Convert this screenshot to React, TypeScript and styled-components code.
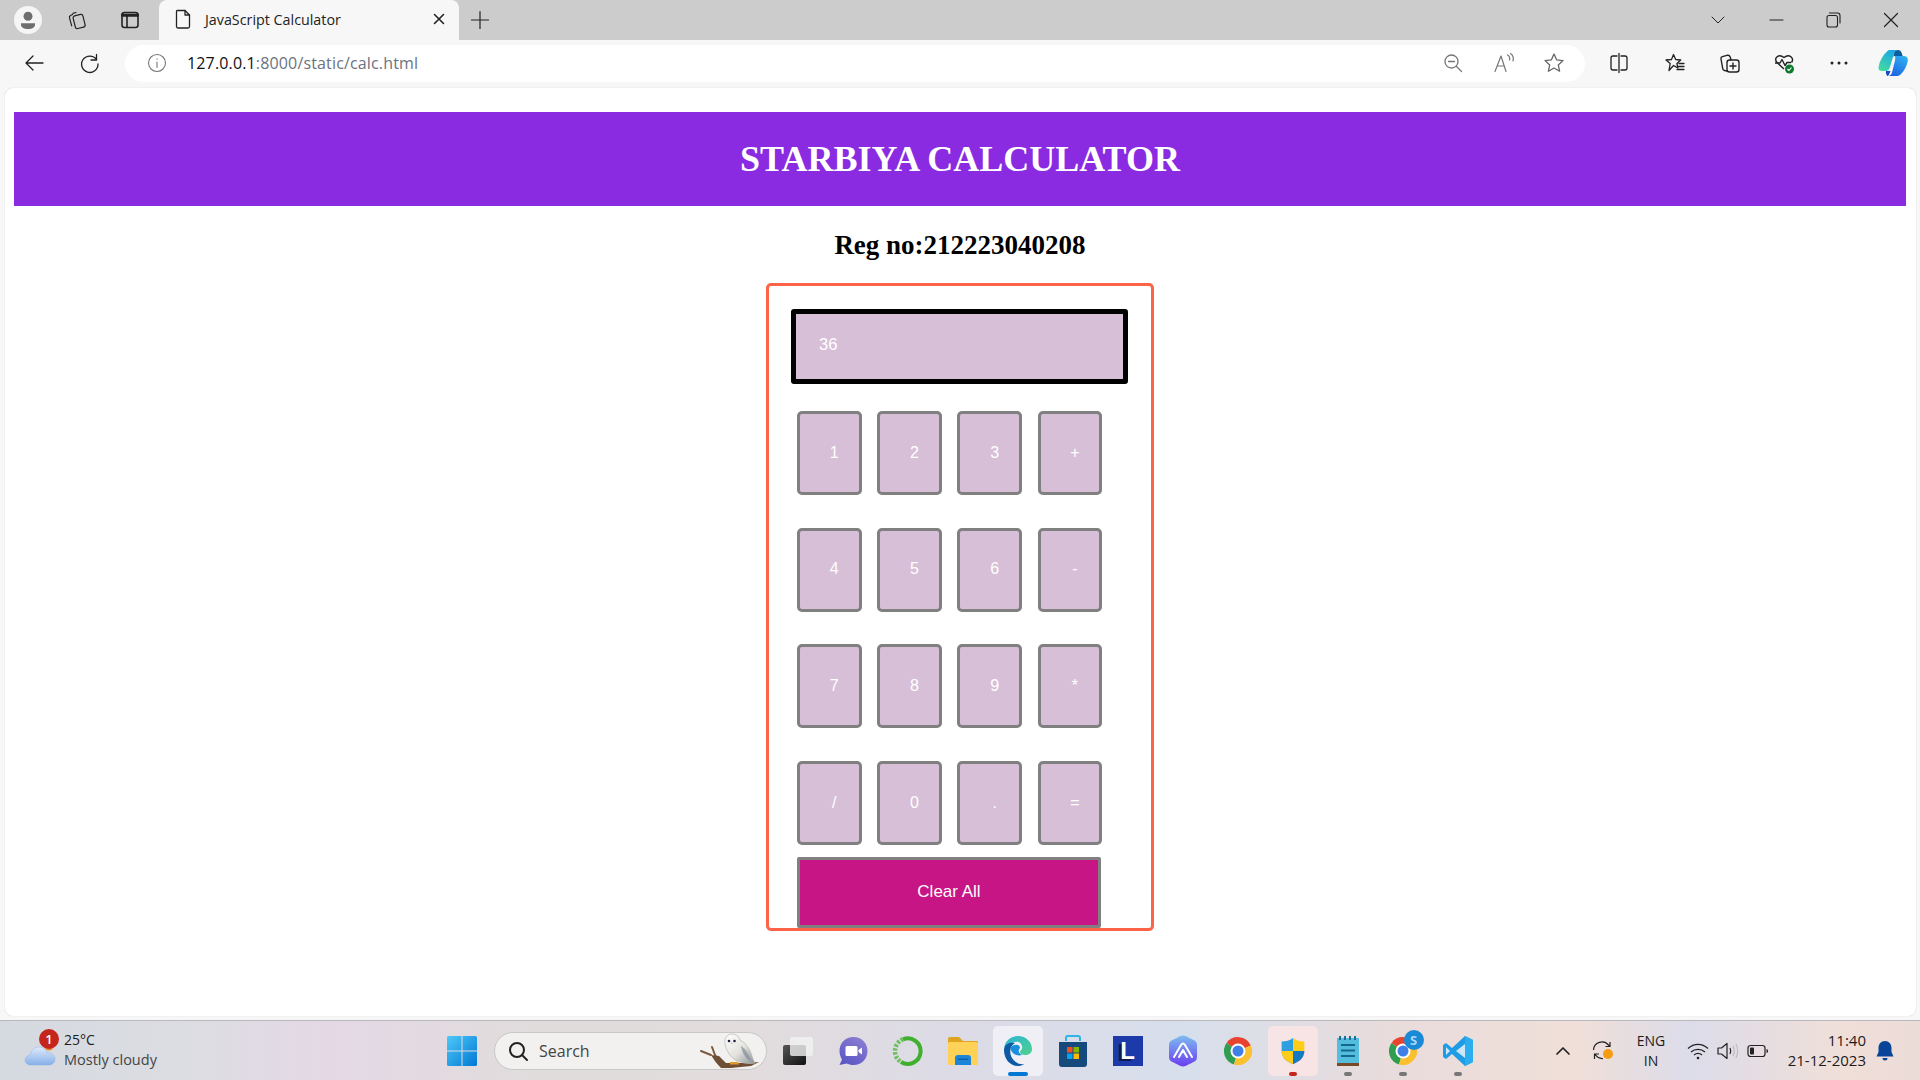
import React from "react";
import styled, { createGlobalStyle } from "styled-components";

const GlobalStyle = createGlobalStyle`
  html, body { margin: 0; padding: 0; height: 100%; overflow: hidden; }
  body { font-family: "Open Sans", "Noto Sans", sans-serif; background: #f7f7f7; }
  #root { height: 100%; }
`;

const KEYS = ["1", "2", "3", "+", "4", "5", "6", "-", "7", "8", "9", "*", "/", "0", ".", "="];

const Line = ({ color = "#222", w = 1.4, children }: { color?: string; w?: number; children: React.ReactNode }) => (
  <svg width="24" height="24" viewBox="0 0 24 24" fill="none" stroke={color} strokeWidth={w} strokeLinecap="round" strokeLinejoin="round">
    {children}
  </svg>
);

const Profile = () => (
  <svg width="30" height="30" viewBox="0 0 30 30">
    <circle cx="15" cy="15" r="15" fill="#f5f5f5" />
    <circle cx="15" cy="11" r="4.8" fill="#6e6e6e" />
    <path d="M7.5 18.5h15v1.5c0 3-3.4 4.6-7.5 4.6S7.5 23 7.5 20z" fill="#6e6e6e" />
  </svg>
);

const Chevron = () => <Line w={1}><path d="M6 9l6 6 6-6" /></Line>;

export default function App() {
  return (
    <Screen>
      <GlobalStyle />
      <TabStrip>
        <Slot $w={14} />
        <Slot $w={28}><Profile /></Slot>
        <Slot $w={23} />
        <Slot $w={24}>
          <Line w={1.2}>
            <rect x="9" y="7" width="10" height="13" rx="2" transform="rotate(-14 14 13)" />
            <path d="M7.5 6.5l-2 1c-1 .6-1.300 1.400-1 2.400l2.200 8M11 4.500l-3 .8" />
          </Line>
        </Slot>
        <Slot $w={29} />
        <Slot $w={24}>
          <Line w={1.6}>
            <rect x="4" y="4.500" width="16" height="15" rx="2.500" />
            <path d="M4 6.500h16V8H4z" fill="#222" />
            <path d="M9 8v11" />
          </Line>
        </Slot>
        <Slot $w={17} />
        <Tab>
          <Slot $w={24}>
            <Line w={1.3}>
              <path d="M6 3.500h8l4.500 4.500v11.500a1.500 1.500 0 0 1-1.500 1.500H7a1.500 1.500 0 0 1-1.500-1.500V5A1.500 1.500 0 0 1 6 3.500z" />
              <path d="M14 3.500V8h4.500" />
            </Line>
          </Slot>
          <TabTitle>JavaScript Calculator</TabTitle>
          <Slot $w={24}><Line w={1.6}><path d="M7.500 7.500l9 9M16.500 7.500l-9 9" /></Line></Slot>
        </Tab>
        <Slot $w={9} />
        <Slot $w={24}><Line w={1.2}><path d="M12 3.500v17M3.500 12h17" /></Line></Slot>
        <Spacer />
        <Slot $w={24}><Chevron /></Slot>
        <Slot $w={34} />
        <Slot $w={24}><Line w={1.2}><path d="M6 12h13" /></Line></Slot>
        <Slot $w={33} />
        <Slot $w={24}>
          <Line w={1.1}>
            <rect x="6" y="7.500" width="10.500" height="11.500" rx="2" />
            <path d="M8.500 5h8a2.500 2.500 0 0 1 2.500 2.500V15" />
          </Line>
        </Slot>
        <Slot $w={34} />
        <Slot $w={24}><Line w={1.2}><path d="M5.500 5.500l13 13M18.500 5.500l-13 13" /></Line></Slot>
        <Slot $w={17} />
      </TabStrip>

      <Toolbar>
        <Slot $w={22} />
        <Slot $w={24}><Line w={1.3}><path d="M21 12H4M11 5l-7 7 7 7" /></Line></Slot>
        <Slot $w={32} />
        <Slot $w={24}>
          <Line w={1.3}>
            <path d="M18.500 3.500V9H13" />
            <path d="M18.500 8.500A8.200 8.200 0 1 0 20 13" />
          </Line>
        </Slot>
        <Slot $w={23} />
        <AddressBar>
          <Slot $w={20} />
          <Slot $w={24}>
            <Line color="#777" w={1.1}>
              <circle cx="12" cy="12" r="8.500" />
              <path d="M12 11v5.500M12 7.800v.4" />
            </Line>
          </Slot>
          <Slot $w={18} />
          <Url>
            <b>127.0.0.1</b>:8000/static/calc.html
          </Url>
          <Spacer />
          <Slot $w={24}>
            <Line color="#777" w={1.3}>
              <circle cx="10.500" cy="10.500" r="6.500" />
              <path d="M7.500 10.500h6M15.500 15.500l5 5" />
            </Line>
          </Slot>
          <Slot $w={27} />
          <Slot $w={24}>
            <Line color="#777" w={1.2}>
              <path d="M3 20.500L9 5l5 15.500M5 15h7.500" />
              <path d="M15.500 4c1.800 1 2.600 3 2 5M18.500 2.500c2.500 1.800 3.300 4.500 2.500 7.500" />
            </Line>
          </Slot>
          <Slot $w={26} />
          <Slot $w={24}>
            <Line color="#666" w={1.3}>
              <path d="M12 3l2.700 5.900 6.300.7-4.700 4.300 1.300 6.300-5.600-3.200-5.600 3.200 1.300-6.300L3 9.600l6.300-.7z" />
            </Line>
          </Slot>
          <Slot $w={19} />
        </AddressBar>
        <Slot $w={22} />
        <Slot $w={24}>
          <Line w={1.3}>
            <path d="M10 5H6a2 2 0 0 0-2 2v10a2 2 0 0 0 2 2h4M14 5h4a2 2 0 0 1 2 2v10a2 2 0 0 1-2 2h-4M12 2.500v19" />
          </Line>
        </Slot>
        <Slot $w={32} />
        <Slot $w={24}>
          <Line w={1.3}>
            <path d="M10.500 3.500l2.200 5 5 .5-3.800 3.500 1 4.500-4.400-2.500L6 19.500 7.200 12.500 3 9l5.500-.5z" />
            <path d="M16 12.500h5M15.500 15.500H21M14 18.500h7" />
          </Line>
        </Slot>
        <Slot $w={31} />
        <Slot $w={24}>
          <Line w={1.4}>
            <rect x="9" y="9" width="12" height="12" rx="2.500" />
            <path d="M15 12v6M12 15h6" />
            <path d="M9 20l-2.500-.5c-1-.3-1.600-1-1.800-2L3 8c-.2-1 .3-2 1.300-2.300L9 4.300c1.500-.4 2.600 0 3.200 1.700l.8 3" />
          </Line>
        </Slot>
        <Slot $w={30} />
        <Slot $w={24}>
          <svg width="24" height="24" viewBox="0 0 24 24" fill="none" stroke="#222" strokeWidth="1.400" strokeLinejoin="round">
            <path d="M12 18l-7-6.500C1.500 7.500 6.500 2 12 6.500 17.500 2 22.500 7.500 19.500 11.500" />
            <path d="M3 12h5l2-3.500 3 6 2-3h4" />
            <circle cx="17.500" cy="18" r="4.500" fill="#0e7a2f" stroke="none" />
            <path d="M15.500 18l1.500 1.500 2.500-3" stroke="#fff" strokeWidth="1.100" />
          </svg>
        </Slot>
        <Slot $w={31} />
        <Slot $w={24}>
          <svg width="24" height="24" viewBox="0 0 24 24" fill="#222">
            <circle cx="5" cy="12" r="1.500" />
            <circle cx="12" cy="12" r="1.500" />
            <circle cx="19" cy="12" r="1.500" />
          </svg>
        </Slot>
        <Slot $w={27} />
        <Slot $w={30}>
          <svg width="30" height="28" viewBox="0 0 30 28">
            <defs>
              <linearGradient id="cpA" x1="0.7" y1="0" x2="0.2" y2="1">
                <stop offset="0" stopColor="#1ba6e6" />
                <stop offset="1" stopColor="#45dba0" />
              </linearGradient>
              <linearGradient id="cpB" x1="0.8" y1="0" x2="0.2" y2="1">
                <stop offset="0" stopColor="#2fb0f2" />
                <stop offset="1" stopColor="#1c62e0" />
              </linearGradient>
            </defs>
            <path d="M9 2.500C10 1.300 11 1 12.500 1H20c-2 0-3.500 1.500-4 3.500L12 18c-.7 2.500-2 4-4.500 4H4C1.500 22 0 20.500.5 18 1.500 12.500 4.500 6.500 9 2.500z" fill="url(#cpA)" />
            <path d="M17 7h8.500c3 0 4.800 2 4.300 5-1 5-3.500 10-7 13.200-1 1-2.500 1.800-4 1.800H10c2 0 3.500-1.500 4-3.500l3-12c.4-1.600.2-3.500 0-4.500z" fill="url(#cpB)" />
            <path d="M20 1c1.700 0 3 1 3.500 2.500L24.700 7H17c-.8 0-1.500.4-1.800 1l.8-3.500C16.500 2.500 18 1 20 1z" fill="#0b5f9e" />
            <path d="M8 22h4.500l-1 2.500c-.4 1-.8 1.800-1.500 2.500H9.500c-1.300-1-1.800-3-1.500-5z" fill="#1a46c8" />
          </svg>
        </Slot>
        <Spacer />
      </Toolbar>

      <PageFrame>
        <Banner>STARBIYA CALCULATOR</Banner>
        <RegNo>Reg no:212223040208</RegNo>
        <Calculator>
          <Display readOnly value="36" />
          <Keys>
            {KEYS.map((k) => (
              <Key key={k}>{k}</Key>
            ))}
          </Keys>
          <ClearAll>Clear All</ClearAll>
        </Calculator>
      </PageFrame>

      <Taskbar>
        <Weather>
          <WeatherIcon>
            <svg width="36" height="38" viewBox="0 0 36 38">
              <defs>
                <linearGradient id="cloud" x1="0" y1="0" x2="0" y2="1">
                  <stop offset="0" stopColor="#dfeafa" />
                  <stop offset="1" stopColor="#86b0ea" />
                </linearGradient>
              </defs>
              <circle cx="25" cy="13" r="4.500" fill="#f08a24" />
              <path d="M7 32c-3.500 0-6-2-6-5 0-2.500 2-4.500 4.800-4.800C7 17.500 10.500 14 15 14c4 0 7 2.300 8 5.600 4 0 8 2.400 8 6.400s-3 6-6.500 6z" fill="url(#cloud)" stroke="#8fb3e4" strokeWidth=".5" />
            </svg>
            <Badge>1</Badge>
          </WeatherIcon>
          <WeatherText>
            <Temp>25°C</Temp>
            <Sky>Mostly cloudy</Sky>
          </WeatherText>
        </Weather>

        <Slot $w={42}>
          <svg width="30" height="30" viewBox="0 0 30 30">
            <defs>
              <linearGradient id="win" x1="0" y1="0" x2="1" y2="1">
                <stop offset="0" stopColor="#4fc8f8" />
                <stop offset="1" stopColor="#0078d4" />
              </linearGradient>
            </defs>
            <path d="M0 1.500A1.500 1.500 0 0 1 1.500 0h13v14.500H0zM15.500 0h13A1.500 1.500 0 0 1 30 1.500v13H15.500zM0 15.500h14.500V30h-13A1.500 1.500 0 0 1 0 28.500zM15.500 15.500H30v13a1.500 1.500 0 0 1-1.500 1.500h-13z" fill="url(#win)" />
          </svg>
        </Slot>
        <Slot $w={11} />
        <SearchBox>
          <Slot $w={24}>
            <Line w={2}>
              <circle cx="11" cy="11" r="7" />
              <path d="M16 16l5 5" />
            </Line>
          </Slot>
          <SearchLabel>Search</SearchLabel>
          <Spacer />
          <svg width="66" height="36" viewBox="0 0 66 36">
            <defs>
              <linearGradient id="owl" x1="0" y1="0" x2="1" y2="1">
                <stop offset="0" stopColor="#ffffff" />
                <stop offset="0.55" stopColor="#e2e2dc" />
                <stop offset="1" stopColor="#8b9097" />
              </linearGradient>
            </defs>
            <path d="M3 18l10 4M14 14l3 8 4 7" fill="none" stroke="#7d5a40" strokeWidth="2" strokeLinecap="round" />
            <path d="M13 22l8 1 7 7 18 0 15-1-8 4-20 2-10 0c-4-4-7-8-10-13z" fill="#6f4e36" />
            <path d="M27 10c-1-4 2-9 7-9s7 3 8 6c6 3 10 9 12 16 .8 3 2 5 3 7-6 1-13 0-18-2-6-3-11-10-12-18z" fill="url(#owl)" stroke="#bdbdb6" strokeWidth=".8" />
            <path d="M43 13c5 3 8 9 10 15-5-2-9-8-10-15z" fill="#7d8796" fillOpacity=".65" />
            <circle cx="31" cy="8" r="1.300" fill="#1f1f44" />
            <circle cx="36.500" cy="8" r="1.300" fill="#1f1f44" />
            <path d="M33.800 9l-.7 1.800h1.400z" fill="#c49b6a" />
            <path d="M32 29h8l1 2.500h-9z" fill="#e09a30" />
          </svg>
        </SearchBox>
        <Slot $w={3} />

        <TaskIcon>
          <svg width="30" height="28" viewBox="0 0 30 28">
            <defs>
              <linearGradient id="dk" x1="0" y1="0" x2="1" y2="1">
                <stop offset="0" stopColor="#555" />
                <stop offset="1" stopColor="#111" />
              </linearGradient>
            </defs>
            <rect x="0" y="8" width="23" height="20" rx="2" fill="url(#dk)" />
            <rect x="7" y="0" width="23" height="19" rx="2" fill="#f2f2f2" fillOpacity=".8" />
          </svg>
        </TaskIcon>
        <TaskIcon>
          <svg width="30" height="30" viewBox="0 0 30 30">
            <defs>
              <linearGradient id="meet" x1="0.8" y1="0" x2="0.2" y2="1">
                <stop offset="0" stopColor="#8c7fd2" />
                <stop offset="1" stopColor="#5a55c4" />
              </linearGradient>
            </defs>
            <path d="M15.500 1C7.500 1 1.500 7 1.500 15c0 3 1 6 2.500 8.500L1.500 29l7-1.500c2 .9 4.500 1.500 7 1.500 8 0 14-6 14-14S23.500 1 15.500 1z" fill="url(#meet)" />
            <rect x="7.500" y="10" width="12" height="10" rx="1.500" fill="#fff" />
            <path d="M20.500 14l3.500-2.500v7L20.500 16z" fill="#fff" />
          </svg>
        </TaskIcon>
        <TaskIcon>
          <svg width="32" height="32" viewBox="0 0 32 32" fill="none">
            <path d="M11 4.300A12.800 12.800 0 1 1 9 27" stroke="#3fb02e" strokeWidth="4" />
            <path d="M11 4.300A12.800 12.800 0 0 0 9 27" stroke="#6cc05c" strokeWidth="4.500" strokeDasharray="2.500 1.500" />
          </svg>
        </TaskIcon>
        <TaskIcon>
          <svg width="32" height="30" viewBox="0 0 32 30">
            <path d="M1 3a2 2 0 0 1 2-2h9l4 4h14a1 1 0 0 1 1 1v4H1z" fill="#e0a520" />
            <rect x="1" y="6" width="30" height="23" rx="1.500" fill="#fdd257" />
            <path d="M8 29v-7a3 3 0 0 1 3-3h10a3 3 0 0 1 3 3v7z" fill="#1b86d8" />
            <rect x="11" y="22.500" width="10" height="1.500" fill="#0f5fa8" />
          </svg>
        </TaskIcon>
        <TaskIcon $bg="rgba(245,245,250,.75)">
          <svg width="30" height="32" viewBox="0 0 30 32">
            <defs>
              <linearGradient id="edgeA" x1="0" y1="0" x2="1" y2="1">
                <stop offset="0" stopColor="#2bb5d8" />
                <stop offset="1" stopColor="#4fd18a" />
              </linearGradient>
            </defs>
            <path d="M1 15C1 6 8 1 15 1c8 0 14 6 14 13 0 4-3 6-7 6-3 0-5-1-5-3s3-2 2-6-4-5-7-4C7 8 1 10 1 15z" fill="url(#edgeA)" />
            <path d="M1 15c0-6 7-9 11-7-4 2-6 7-4 13 2 5 7 9 13 8-2 1.500-4 2-6 2C7 31 1 24 1 15z" fill="#0c59a4" />
            <path d="M8 12c3-3 9-3 9 1-2 2-2 5 2 7-3 1-8 0-10-3-1-2-2-3-1-5z" fill="#1a90dc" />
          </svg>
          <Indicator $c="#0078d4" $w={20} />
        </TaskIcon>
        <TaskIcon>
          <svg width="30" height="34" viewBox="0 0 30 34">
            <path d="M8 7V4a2 2 0 0 1 2-2h10a2 2 0 0 1 2 2v3" fill="none" stroke="#2fb4e8" strokeWidth="2" />
            <path d="M1 8h28v22a3 3 0 0 1-3 3H4a3 3 0 0 1-3-3z" fill="#174a7c" />
            <rect x="9" y="13" width="5.500" height="5.500" fill="#f25022" />
            <rect x="15.500" y="13" width="5.500" height="5.500" fill="#7fba00" />
            <rect x="9" y="19.500" width="5.500" height="5.500" fill="#00a4ef" />
            <rect x="15.500" y="19.500" width="5.500" height="5.500" fill="#ffb900" />
          </svg>
        </TaskIcon>
        <TaskIcon>
          <LogoL>L</LogoL>
        </TaskIcon>
        <TaskIcon>
          <svg width="30" height="32" viewBox="0 0 30 32">
            <defs>
              <linearGradient id="hex" x1="0" y1="0" x2="0" y2="1">
                <stop offset="0" stopColor="#7dbdf0" />
                <stop offset="1" stopColor="#6a3df0" />
              </linearGradient>
            </defs>
            <path d="M12 1.200c2-.9 4-.9 6 0l8 4c2 1 3 2.500 3 4.800v12c0 2.300-1 3.800-3 4.800l-8 4c-2 .9-4 .9-6 0l-8-4c-2-1-3-2.500-3-4.800V10c0-2.300 1-3.800 3-4.800z" fill="url(#hex)" />
            <path d="M6 22l7-12q2-3 4 0l7 12M11 22l4-7 4 7" fill="none" stroke="#fff" strokeWidth="2" strokeLinecap="round" strokeLinejoin="round" />
          </svg>
        </TaskIcon>
        <TaskIcon>
          <ChromeLogo />
        </TaskIcon>
        <TaskIcon $bg="rgba(255,230,230,.75)">
          <svg width="26" height="28" viewBox="0 0 28 32">
            <path d="M14 1C10 4 6 5 1 5v11c0 7 5 12 13 15z" fill="#2c9fe0" />
            <path d="M14 1c4 3 8 4 13 4v11H14z" fill="#ffcc1a" />
            <path d="M1 16h13v15C6 28 1 23 1 16z" fill="#ffcc1a" />
            <path d="M14 16h13c0 7-5 12-13 15z" fill="#1579c4" />
          </svg>
          <Indicator $c="#c4261d" $w={8} />
        </TaskIcon>
        <TaskIcon>
          <svg width="24" height="30" viewBox="0 0 24 30">
            <rect x="1" y="2" width="22" height="25" fill="#54bcdc" />
            <rect x="1" y="27" width="22" height="3" fill="#7a4a28" />
            <path d="M4 0v4M9 0v4M14 0v4M19 0v4" stroke="#1b6f94" strokeWidth="2" />
            <path d="M5 9h14M5 14.500h14M5 20h14" stroke="#14688f" strokeWidth="2" />
          </svg>
          <Indicator $c="#777" $w={8} />
        </TaskIcon>
        <TaskIcon>
          <ChromeLogo />
          <Skype>S</Skype>
          <Indicator $c="#777" $w={8} />
        </TaskIcon>
        <TaskIcon>
          <svg width="32" height="32" viewBox="0 0 32 32">
            <path d="M23 1l8 4v22l-8 4-13-12-6 5-3-2V10l3-2 6 5z" fill="#1f9ce6" />
            <path d="M23 1l8 4v22l-8 4z" fill="#2aaef0" />
            <path d="M23 9l-9 7 9 7z" fill="#dfeef9" fillOpacity=".9" />
            <path d="M4 12v8l4-4z" fill="#dfeef9" fillOpacity=".9" />
          </svg>
          <Indicator $c="#777" $w={8} />
        </TaskIcon>

        <Spacer />

        <Slot $w={24}><Line w={1.7}><path d="M6 15l6-6 6 6" /></Line></Slot>
        <Slot $w={16} />
        <Slot $w={24}>
          <svg width="24" height="24" viewBox="0 0 24 24" fill="none" stroke="#222" strokeWidth="1.200">
            <path d="M2.500 11a8.500 8.500 0 0 1 15-5l1.500 1.500M19 3v4.500h-4.500" />
            <path d="M12 19.500a8 8 0 0 1-7-3L3.500 15M3.500 20v-5H8" />
            <circle cx="17" cy="15" r="5" fill="#f59c12" stroke="none" />
          </svg>
        </Slot>
        <Slot $w={18} />
        <Lang>ENG<br />IN</Lang>
        <Slot $w={17} />
        <Slot $w={24}>
          <svg width="24" height="24" viewBox="0 0 24 24" fill="none" stroke="#222" strokeWidth="1.300">
            <path d="M2 9.500c6-5.500 14-5.500 20 0M5 13c4-3.500 10-3.500 14 0M8 16c2.500-2 5.500-2 8 0" />
            <circle cx="12" cy="19" r="1.300" fill="#222" stroke="none" />
          </svg>
        </Slot>
        <Slot $w={5} />
        <Slot $w={24}>
          <svg width="24" height="24" viewBox="0 0 24 24" fill="none" strokeWidth="1.200">
            <path d="M3 9h3.500L12 4.500v15L6.500 15H3z" stroke="#222" strokeLinejoin="round" />
            <path d="M15 9c1 2 1 4 0 6" stroke="#222" />
            <path d="M18 7c1.500 3 1.500 7 0 10M21 5c2 4 2 10 0 14" stroke="#bbb" />
          </svg>
        </Slot>
        <Slot $w={7} />
        <Slot $w={24}>
          <svg width="24" height="24" viewBox="0 0 24 24" fill="none">
            <rect x="2" y="6.500" width="17" height="11" rx="2.500" stroke="#222" strokeWidth="1.200" />
            <rect x="4" y="8.500" width="4" height="7" rx="1" fill="#222" />
            <path d="M20.500 10v4c1 0 1.500-1 1.500-2s-.5-2-1.500-2z" fill="#222" />
          </svg>
        </Slot>
        <Slot $w={12} />
        <Clock>
          <span>11:40</span>
          <span>21-12-2023</span>
        </Clock>
        <Slot $w={7} />
        <Slot $w={24}>
          <svg width="24" height="24" viewBox="0 0 24 24" fill="#0a4499">
            <path d="M12 2c-4 0-6.500 3-6.500 7v4L3.500 17.500h17L18.500 13V9c0-4-2.500-7-6.500-7z" />
            <path d="M9.500 19h5a2.500 2.500 0 0 1-5 0z" />
          </svg>
        </Slot>
        <Slot $w={23} />
      </Taskbar>
    </Screen>
  );
}

function ChromeLogo() {
  return (
    <svg width="30" height="30" viewBox="0 0 30 30">
      <path d="M15 15L3.500 7A14 14 0 0 1 27.800 9.500z" fill="#e8432e" />
      <path d="M15 15L3.500 7A14 14 0 0 0 11 28.500z" fill="#2f9e50" />
      <path d="M15 15l12.800-5.500A14 14 0 0 1 11 28.500z" fill="#fbc02d" />
      <circle cx="15" cy="15" r="7.500" fill="#fff" />
      <circle cx="15" cy="15" r="5.500" fill="#3f7fe8" />
    </svg>
  );
}

const Screen = styled.div`
  width: 1920px;
  height: 1080px;
  display: flex;
  flex-direction: column;
  background: #f7f7f7;
  overflow: hidden;
`;

const Slot = styled.div<{ $w: number }>`
  width: ${(p) => p.$w}px;
  flex: 0 0 ${(p) => p.$w}px;
  display: flex;
  align-items: center;
  justify-content: center;
`;

const Spacer = styled.div`
  flex: 1;
`;

const TabStrip = styled.div`
  height: 40px;
  flex: 0 0 40px;
  background: #cccccc;
  display: flex;
  align-items: center;
`;

const Tab = styled.div`
  width: 300px;
  height: 40px;
  box-sizing: border-box;
  background: #f7f7f7;
  border-radius: 8px 8px 0 0;
  padding: 0 8px 2px 12px;
  display: flex;
  align-items: center;
`;

const TabTitle = styled.div`
  flex: 1;
  margin-left: 10px;
  font-size: 14.300px;
  color: #222;
`;

const Toolbar = styled.div`
  height: 48px;
  flex: 0 0 48px;
  display: flex;
  align-items: center;
  padding-bottom: 2px;
  box-sizing: border-box;
`;

const AddressBar = styled.div`
  width: 1460px;
  height: 37px;
  background: #fff;
  border-radius: 19px;
  display: flex;
  align-items: center;
`;

const Url = styled.div`
  font-size: 16px;
  color: #6b7280;
  letter-spacing: 0.15px;
  b {
    font-weight: 400;
    color: #111;
  }
`;

const PageFrame = styled.main`
  flex: 0 0 928px;
  height: 928px;
  margin: 0 4px 0 5px;
  box-sizing: border-box;
  padding: 24px 10px 0 9px;
  background: #fff;
  border-radius: 8px;
  box-shadow: 0 0 1px rgba(0, 0, 0, 0.25);
  display: flex;
  flex-direction: column;
  align-items: center;
`;

const Banner = styled.h1`
  width: 100%;
  height: 94px;
  margin: 0;
  background: #8a2be2;
  color: #fff;
  font: bold 36px "Liberation Serif", serif;
  display: flex;
  align-items: center;
  justify-content: center;
`;

const RegNo = styled.h2`
  margin: 23px 0 22px;
  height: 32px;
  color: #000;
  font: bold 27px/32px "Liberation Serif", serif;
`;

const Calculator = styled.div`
  width: 388px;
  height: 648px;
  box-sizing: border-box;
  border: 3px solid #ff6347;
  border-radius: 5px;
  padding: 23px 0 0 22px;
`;

const Display = styled.input`
  display: block;
  width: 337px;
  height: 75px;
  box-sizing: border-box;
  border: 5px solid #000;
  border-radius: 3px;
  padding: 0 0 4px 23px;
  outline: none;
  background: #d8bfd8;
  color: #fff;
  font: 16.500px "Liberation Sans", Arial, sans-serif;
`;

const Keys = styled.div`
  margin: 27px 0 0 6px;
  display: grid;
  grid-template-columns: repeat(4, 64.500px);
  grid-auto-rows: 84px;
  column-gap: 15.700px;
  row-gap: 32.700px;
`;

const Key = styled.button`
  box-sizing: border-box;
  border: 3px solid #808080;
  border-radius: 5px;
  background: #d8bfd8;
  color: #fff;
  padding: 0 0 1px 10px;
  font: 16px "Liberation Sans", Arial, sans-serif;
`;

const ClearAll = styled.button`
  display: block;
  margin: 12px 0 0 6px;
  width: 304px;
  height: 71px;
  box-sizing: border-box;
  border: 3px solid #808080;
  border-radius: 2px;
  background: #c71585;
  color: #fff;
  padding: 0 0 2px;
  font: 17px "Liberation Sans", Arial, sans-serif;
`;

const Taskbar = styled.footer`
  margin-top: 4px;
  flex: 0 0 60px;
  height: 60px;
  box-sizing: border-box;
  border-top: 1px solid #b9b9bd;
  display: flex;
  align-items: center;
  background: linear-gradient(
    90deg,
    #d5dae0 0%,
    #dcdde2 10%,
    #e4d8e5 17%,
    #e0dcdc 28%,
    #e2dcdc 38%,
    #dcdbe6 50%,
    #d7dfec 62%,
    #e8dcdc 72%,
    #f0dfd8 82%,
    #dcdcea 88%,
    #f0dfd8 96%,
    #ecdcd8 100%
  );
`;

const Weather = styled.div`
  width: 441px;
  flex: 0 0 441px;
  padding-left: 24px;
  box-sizing: border-box;
  display: flex;
  align-items: center;
`;

const WeatherIcon = styled.div`
  position: relative;
  width: 40px;
  height: 40px;
  display: flex;
  align-items: flex-end;
`;

const Badge = styled.span`
  position: absolute;
  left: 15px;
  top: -2px;
  width: 20px;
  height: 20px;
  border-radius: 50%;
  background: #c4261d;
  color: #fff;
  font-size: 13px;
  font-weight: 600;
  display: flex;
  align-items: center;
  justify-content: center;
`;

const WeatherText = styled.div`
  display: flex;
  flex-direction: column;
  line-height: 20px;
  padding-bottom: 2px;
`;

const Temp = styled.span`
  font-size: 14px;
  color: #1c1c1c;
`;

const Sky = styled.span`
  font-size: 14.500px;
  color: #444;
`;

const SearchBox = styled.div`
  width: 273px;
  height: 38px;
  box-sizing: border-box;
  padding: 0 2px 0 11px;
  background: #f2f1f0;
  border: 1px solid #c8c8c8;
  border-radius: 19px;
  display: flex;
  align-items: center;
  overflow: hidden;
`;

const SearchLabel = styled.span`
  margin-left: 9px;
  font-size: 16px;
  color: #444;
`;

const TaskIcon = styled.div<{ $bg?: string }>`
  position: relative;
  width: 50px;
  height: 50px;
  margin: 0 2.500px;
  border-radius: 5px;
  background: ${(p) => p.$bg || "transparent"};
  display: flex;
  align-items: center;
  justify-content: center;
`;

const Indicator = styled.span<{ $c: string; $w: number }>`
  position: absolute;
  left: 50%;
  bottom: 0;
  width: ${(p) => p.$w}px;
  height: 4px;
  margin-left: ${(p) => -p.$w / 2}px;
  border-radius: 2px;
  background: ${(p) => p.$c};
`;

const LogoL = styled.div`
  width: 30px;
  height: 30px;
  background: #1c3aa9;
  color: #fff;
  font: bold 24px "Liberation Sans", sans-serif;
  text-shadow: -3px 2px 0 #0e1a4f;
  display: flex;
  align-items: center;
  justify-content: center;
`;

const Skype = styled.span`
  position: absolute;
  right: 4px;
  top: 4px;
  width: 20px;
  height: 20px;
  border-radius: 50%;
  background: #1b8ad6;
  color: #a9d8f7;
  font-size: 13px;
  font-weight: 700;
  display: flex;
  align-items: center;
  justify-content: center;
`;

const Lang = styled.div`
  width: 36px;
  text-align: center;
  font-size: 14px;
  line-height: 20px;
  color: #1c1c1c;
`;

const Clock = styled.div`
  width: 84px;
  display: flex;
  flex-direction: column;
  align-items: flex-end;
  font-size: 15px;
  line-height: 20px;
  color: #1c1c1c;
  padding-bottom: 2px;
`;
